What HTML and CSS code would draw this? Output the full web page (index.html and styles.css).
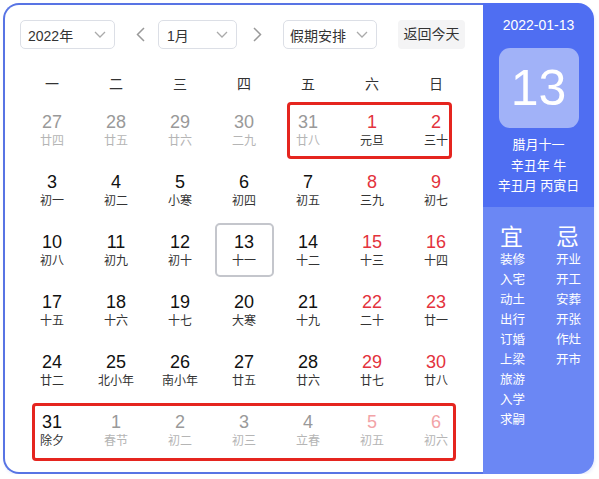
FILE: index.html
```html
<!DOCTYPE html>
<html lang="zh-CN">
<head>
<meta charset="utf-8">
<title>日历</title>
<link rel="stylesheet" href="styles.css">
</head>
<body>
<div class="calendar">
  <div class="main">
    <div class="toolbar">
      <div class="select year"><span>2022年</span><svg class="chev" width="12" height="7" viewBox="0 0 12 7"><path d="M1 1l5 5 5-5" fill="none" stroke="#aaa" stroke-width="1.3"/></svg></div>
      <div class="arrow prev"><svg width="9" height="15" viewBox="0 0 9 15"><path d="M8 1L1.5 7.5 8 14" fill="none" stroke="#999" stroke-width="1.5"/></svg></div>
      <div class="select month"><span>1月</span><svg class="chev" width="12" height="7" viewBox="0 0 12 7"><path d="M1 1l5 5 5-5" fill="none" stroke="#aaa" stroke-width="1.3"/></svg></div>
      <div class="arrow next"><svg width="9" height="15" viewBox="0 0 9 15"><path d="M1 1l6.5 6.5L1 14" fill="none" stroke="#999" stroke-width="1.5"/></svg></div>
      <div class="select holiday"><span>假期安排</span><svg class="chev" width="12" height="7" viewBox="0 0 12 7"><path d="M1 1l5 5 5-5" fill="none" stroke="#aaa" stroke-width="1.3"/></svg></div>
      <div class="today-btn">返回今天</div>
    </div>

    <div class="weekdays">
      <div>一</div><div>二</div><div>三</div><div>四</div><div>五</div><div>六</div><div>日</div>
    </div>

    <div class="grid">
      <div class="cell"><div class="day other"><b>27</b><i>廿四</i></div></div>
      <div class="cell"><div class="day other"><b>28</b><i>廿五</i></div></div>
      <div class="cell"><div class="day other"><b>29</b><i>廿六</i></div></div>
      <div class="cell"><div class="day other"><b>30</b><i>二九</i></div></div>
      <div class="cell"><div class="day other"><b>31</b><i>廿八</i></div></div>
      <div class="cell"><div class="day red"><b>1</b><i>元旦</i></div></div>
      <div class="cell"><div class="day red"><b>2</b><i>三十</i></div></div>

      <div class="cell"><div class="day"><b>3</b><i>初一</i></div></div>
      <div class="cell"><div class="day"><b>4</b><i>初二</i></div></div>
      <div class="cell"><div class="day"><b>5</b><i>小寒</i></div></div>
      <div class="cell"><div class="day"><b>6</b><i>初四</i></div></div>
      <div class="cell"><div class="day"><b>7</b><i>初五</i></div></div>
      <div class="cell"><div class="day red"><b>8</b><i>三九</i></div></div>
      <div class="cell"><div class="day red"><b>9</b><i>初七</i></div></div>

      <div class="cell"><div class="day"><b>10</b><i>初八</i></div></div>
      <div class="cell"><div class="day"><b>11</b><i>初九</i></div></div>
      <div class="cell"><div class="day"><b>12</b><i>初十</i></div></div>
      <div class="cell"><div class="day today"><b>13</b><i>十一</i></div></div>
      <div class="cell"><div class="day"><b>14</b><i>十二</i></div></div>
      <div class="cell"><div class="day red"><b>15</b><i>十三</i></div></div>
      <div class="cell"><div class="day red"><b>16</b><i>十四</i></div></div>

      <div class="cell"><div class="day"><b>17</b><i>十五</i></div></div>
      <div class="cell"><div class="day"><b>18</b><i>十六</i></div></div>
      <div class="cell"><div class="day"><b>19</b><i>十七</i></div></div>
      <div class="cell"><div class="day"><b>20</b><i>大寒</i></div></div>
      <div class="cell"><div class="day"><b>21</b><i>十九</i></div></div>
      <div class="cell"><div class="day red"><b>22</b><i>二十</i></div></div>
      <div class="cell"><div class="day red"><b>23</b><i>廿一</i></div></div>

      <div class="cell"><div class="day"><b>24</b><i>廿二</i></div></div>
      <div class="cell"><div class="day"><b>25</b><i>北小年</i></div></div>
      <div class="cell"><div class="day"><b>26</b><i>南小年</i></div></div>
      <div class="cell"><div class="day"><b>27</b><i>廿五</i></div></div>
      <div class="cell"><div class="day"><b>28</b><i>廿六</i></div></div>
      <div class="cell"><div class="day red"><b>29</b><i>廿七</i></div></div>
      <div class="cell"><div class="day red"><b>30</b><i>廿八</i></div></div>

      <div class="cell"><div class="day"><b>31</b><i>除夕</i></div></div>
      <div class="cell"><div class="day other"><b>1</b><i>春节</i></div></div>
      <div class="cell"><div class="day other"><b>2</b><i>初二</i></div></div>
      <div class="cell"><div class="day other"><b>3</b><i>初三</i></div></div>
      <div class="cell"><div class="day other"><b>4</b><i>立春</i></div></div>
      <div class="cell"><div class="day other red"><b>5</b><i>初五</i></div></div>
      <div class="cell"><div class="day other red"><b>6</b><i>初六</i></div></div>
    </div>

    <div class="mark mark-top"></div>
    <div class="mark mark-bottom"></div>
  </div>

  <div class="side">
    <div class="side-top">
      <div class="side-date">2022-01-13</div>
      <div class="big-day">13</div>
      <div class="lunar">
        <div>腊月十一</div>
        <div>辛丑年 牛</div>
        <div>辛丑月 丙寅日</div>
      </div>
    </div>
    <div class="side-bottom">
      <div class="col">
        <div class="head">宜</div>
        <div>装修</div><div>入宅</div><div>动土</div><div>出行</div><div>订婚</div><div>上梁</div><div>旅游</div><div>入学</div><div>求嗣</div>
      </div>
      <div class="col">
        <div class="head">忌</div>
        <div>开业</div><div>开工</div><div>安葬</div><div>开张</div><div>作灶</div><div>开市</div>
      </div>
    </div>
  </div>
</div>
</body>
</html>
```

FILE: styles.css
```css
* { box-sizing: border-box; }

body {
  margin: 0;
  background: #fff;
  font-family: "Liberation Sans", "Noto Sans CJK SC", sans-serif;
  color: #333;
}

.calendar {
  display: flex;
  margin: 3px 0 0 3px;
  width: 591px;
  height: 471px;
  box-shadow: 1px 2px 3px rgba(78, 110, 242, 0.12);
  border-radius: 16px;
}

.main {
  position: relative;
  width: 480px;
  height: 471px;
  border: 2px solid #5874e4;
  border-right: none;
  border-radius: 16px 0 0 16px;
  padding: 15px 0 0 15px;
}

.toolbar {
  display: flex;
  align-items: center;
  height: 29px;
}

.select {
  display: flex;
  align-items: center;
  justify-content: space-between;
  height: 29px;
  border: 1px solid #dcdfe6;
  border-radius: 5px;
  padding: 0 8px 0 7px;
  font-size: 14px;
  color: #333;
}
.select.year { width: 95px; }
.select.month { width: 79px; padding-left: 8px; }
.select.holiday { width: 94px; padding-left: 6px; }

.arrow { display: flex; align-items: center; }
.arrow.prev { margin: 0 13px 0 21px; }
.arrow.next { margin: 0 21px 0 16px; }

.today-btn {
  margin-left: 21px;
  width: 67px;
  height: 29px;
  line-height: 29px;
  text-align: center;
  background: #f4f4f5;
  border-radius: 4px;
  font-size: 14px;
  color: #333;
}

.weekdays {
  display: grid;
  grid-template-columns: repeat(7, 64px);
  margin-top: 14px;
  height: 40px;
  align-items: center;
  text-align: center;
  font-size: 14px;
  color: #333;
}

.grid {
  display: grid;
  grid-template-columns: repeat(7, 64px);
  grid-auto-rows: 60px;
}

.cell {
  display: flex;
  justify-content: center;
}

.day {
  width: 59px;
  height: 54px;
  display: flex;
  flex-direction: column;
  align-items: center;
  justify-content: center;
  padding-top: 2px;
  border-radius: 5px;
}
.day b {
  font-weight: normal;
  font-size: 18px;
  line-height: 21px;
  color: #111;
}
.day i {
  font-style: normal;
  font-size: 12px;
  line-height: 17px;
  color: #333;
}
.day.red b { color: #e3323c; }
.day.other b { color: #999; }
.day.other i { color: #b5b5b5; }
.day.other.red b { color: #f2a3a7; }
.day.today { border: 2px solid #c4c6cc; }

.mark {
  position: absolute;
  border: 3px solid #e5251f;
  border-radius: 4px;
  pointer-events: none;
}
.mark-top { left: 282px; top: 97px; width: 165px; height: 57px; }
.mark-bottom { left: 27px; top: 398px; width: 424px; height: 58px; }

.side {
  width: 111px;
  height: 471px;
  display: flex;
  flex-direction: column;
  border-radius: 0 16px 16px 0;
  overflow: hidden;
  color: #fff;
}

.side-top {
  background: #4f6ef2;
  height: 204px;
  display: flex;
  flex-direction: column;
  align-items: center;
  padding-top: 12px;
}
.side-date {
  font-size: 14px;
  line-height: 20px;
}
.big-day {
  margin-top: 13px;
  width: 80px;
  height: 80px;
  border-radius: 11px;
  background: #a1b2f8;
  font-size: 50px;
  line-height: 80px;
  text-align: center;
}
.lunar {
  margin-top: 7px;
  text-align: center;
  font-size: 13px;
  line-height: 20.5px;
}

.side-bottom {
  flex: 1;
  background: #6b87f4;
  display: flex;
  padding: 17px 0 0 17px;
  font-size: 12.5px;
  line-height: 20px;
}
.col { flex: 0 0 auto; width: 56px; }
.col + .col { width: 36px; }
.col .head {
  font-size: 23px;
  line-height: 26px;
}
```
